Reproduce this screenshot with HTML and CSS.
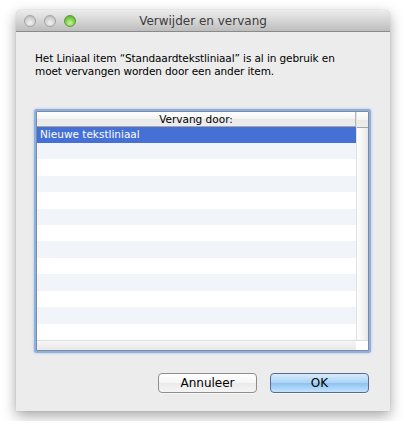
FILE: index.html
```html
<!DOCTYPE html>
<html lang="nl">
<head>
    <meta charset="UTF-8">
    <title>Verwijder en vervang</title>
    <link rel="stylesheet" href="styles.css">
</head>
<body>
    <div class="window">
        <div class="titlebar">
            <div class="lights">
                <span class="light"></span>
                <span class="light"></span>
                <span class="light green"></span>
            </div>
            <div class="title">Verwijder en vervang</div>
        </div>

        <div class="content">
            <p class="message">Het Liniaal item “Standaardtekstliniaal” is al in gebruik en moet vervangen worden door een ander item.</p>

            <div class="table">
                <div class="table-main">
                    <div class="table-body">
                        <div class="header">
                            <span class="header-label">Vervang door:</span>
                        </div>
                        <div class="rows">
                            <div class="row selected">Nieuwe tekstliniaal</div>
                            <div class="row"></div>
                            <div class="row"></div>
                            <div class="row"></div>
                            <div class="row"></div>
                            <div class="row"></div>
                            <div class="row"></div>
                            <div class="row"></div>
                            <div class="row"></div>
                            <div class="row"></div>
                            <div class="row"></div>
                            <div class="row"></div>
                            <div class="row"></div>
                        </div>
                    </div>
                    <div class="vscroll">
                        <div class="corner-top"></div>
                    </div>
                </div>
                <div class="hscroll">
                    <div class="hscroll-track"></div>
                    <div class="corner"></div>
                </div>
            </div>

            <div class="buttons">
                <button class="btn">Annuleer</button>
                <button class="btn default">OK</button>
            </div>
        </div>
    </div>
</body>
</html>
```

FILE: styles.css
```css
body {
    margin: 0;
    padding: 10px 16px;
    background-color: #ffffff;
    font-family: "DejaVu Sans", "Liberation Sans", sans-serif;
}

.window {
    width: 374px;
    height: 401px;
    background-color: #ececec;
    border-radius: 5px 5px 0 0;
    box-shadow: 0 5px 14px rgba(0, 0, 0, 0.35), 0 0 1px rgba(0, 0, 0, 0.3);
    display: flex;
    flex-direction: column;
    overflow: hidden;
}

/* title bar */
.titlebar {
    height: 21px;
    border-bottom: 1px solid #8a8a8a;
    background: linear-gradient(#ececec, #d6d6d6 50%, #bdbdbd);
    display: flex;
    align-items: center;
    position: relative;
}

.lights {
    display: flex;
    gap: 8px;
    padding-left: 8px;
}

.light {
    width: 12px;
    height: 12px;
    border-radius: 50%;
    box-sizing: border-box;
    border: 1px solid #a3a3a3;
    background: radial-gradient(circle at 50% 70%, #f2f2f2 0%, #d2d2d2 55%, #b4b4b4 100%);
}

.light.green {
    border-color: #5d9a3a;
    background: radial-gradient(circle at 50% 70%, #c9f5a0 0%, #7fd24a 50%, #4f9e25 100%);
}

.title {
    position: absolute;
    left: 0;
    right: 0;
    text-align: center;
    font-size: 12px;
    color: #3c3c3c;
    pointer-events: none;
}

/* content */
.content {
    padding: 20px 21px 18px 20px;
    display: flex;
    flex-direction: column;
    flex: 1;
}

.message {
    margin: 0 0 0 -1px;
    font-size: 10.5px;
    line-height: 13px;
    letter-spacing: -0.1px;
    color: #000;
    padding-right: 20px;
}

.table {
    margin-top: 33px;
    height: 240px;
    box-sizing: border-box;
    border: 1px solid #7f8a9a;
    box-shadow: 0 0 0 2px #8db0e2, 0 0 3px 2px rgba(120, 160, 220, 0.6);
    border-radius: 1px;
    background-color: #fff;
    display: flex;
    flex-direction: column;
}

.table-main {
    display: flex;
    flex: 1;
    min-height: 0;
}

.table-body {
    flex: 1;
    display: flex;
    flex-direction: column;
}

.header {
    height: 15px;
    border-bottom: 1px solid #a6a6a6;
    background: linear-gradient(#ffffff, #f4f4f4 50%, #e8e8e8 51%, #ededed);
    border-right: 1px solid #b5b5b5;
    display: flex;
    align-items: center;
    justify-content: center;
    font-size: 10.5px;
    color: #000;
}

.rows {
    flex: 1;
}

.row {
    height: 16.45px;
    font-size: 10.5px;
    line-height: 16px;
    padding-left: 3px;
    color: #000;
}

.row:nth-child(even) {
    background-color: #f1f5fa;
}

.row.selected {
    height: 15.5px;
    line-height: 15px;
    background-color: #4570d5;
    color: #fff;
}

.vscroll {
    width: 11px;
    background: linear-gradient(to right, #ffffff, #f3f3f3 60%, #e6e6e6);
    border-left: 1px solid #e2e2e2;
}

.corner-top {
    height: 15px;
    border-bottom: 1px solid #a6a6a6;
    background: linear-gradient(#ffffff, #f4f4f4 50%, #e8e8e8 51%, #ededed);
}

.hscroll {
    height: 9px;
    display: flex;
    border-top: 1px solid #dedede;
}

.hscroll-track {
    flex: 1;
    background: linear-gradient(#f6f6f6, #e8e8e8);
}

.corner {
    width: 12px;
    background-color: #ffffff;
}

/* buttons */
.buttons {
    margin-top: auto;
    display: flex;
    justify-content: flex-end;
    gap: 13px;
}

.btn {
    width: 99px;
    height: 20px;
    padding: 0;
    border: 1px solid #8e8e8e;
    border-radius: 4px;
    background: linear-gradient(#ffffff, #f6f6f6 50%, #ebebeb 51%, #f4f4f4);
    font-family: "DejaVu Sans", "Liberation Sans", sans-serif;
    font-size: 12px;
    color: #000;
    box-shadow: 0 1px 0 rgba(255, 255, 255, 0.6);
}

.btn.default {
    border-color: #5a6b93;
    background: linear-gradient(#d8ebfb, #a9d2f6 50%, #8cc2f2 51%, #c4e3fb);
}
```
